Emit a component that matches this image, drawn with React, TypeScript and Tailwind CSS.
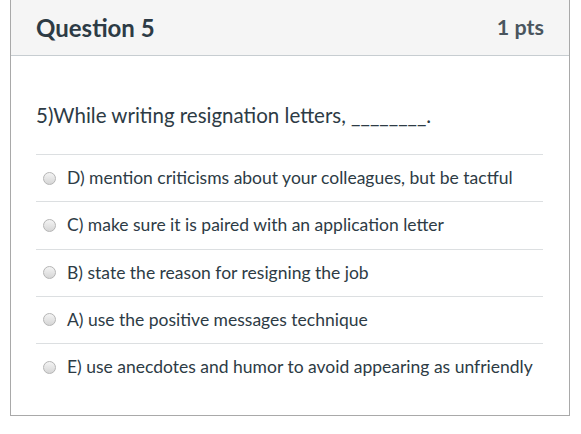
import React from 'react';

const answers = [
  'D) mention criticisms about your colleagues, but be tactful',
  'C) make sure it is paired with an application letter',
  'B) state the reason for resigning the job',
  'A) use the positive messages technique',
  'E) use anecdotes and humor to avoid appearing as unfriendly',
];

const Radio = () => (
  <span className="inline-block h-[13px] w-[13px] shrink-0 rounded-full border border-[#b5b5b5] bg-gradient-to-b from-[#f4f4f4] to-[#d6d6d6]" />
);

export default function App() {
  return (
    <div className="min-h-[434px] bg-white pl-[10px] font-['Lato','Liberation_Sans',sans-serif] text-[#2d3b45]">
      <div className="w-[560px] border-x border-b border-[#a9a9a9]">
        <div className="flex h-[56px] items-center justify-between border-b border-[#c7cdd1] bg-[#f5f5f5] pl-[25px] pr-[25px]">
          <h2 className="text-[24px] font-bold">Question 5</h2>
          <span className="text-[21.5px] font-bold text-[#4a555e]">1 pts</span>
        </div>
        <div className="px-[25px] pb-[25px] pt-[45px]">
          <p className="text-[20.5px] leading-[28px]">5)While writing resignation letters, ________.</p>
          <div className="mt-[25px] mr-[1px]">
            {answers.map((a) => (
              <div
                key={a}
                className="flex h-[47.25px] items-center gap-[11px] border-t border-[#dcdfe1] pl-[7px] text-[17.5px]"
              >
                <Radio />
                <span>{a}</span>
              </div>
            ))}
          </div>
        </div>
      </div>
    </div>
  );
}
